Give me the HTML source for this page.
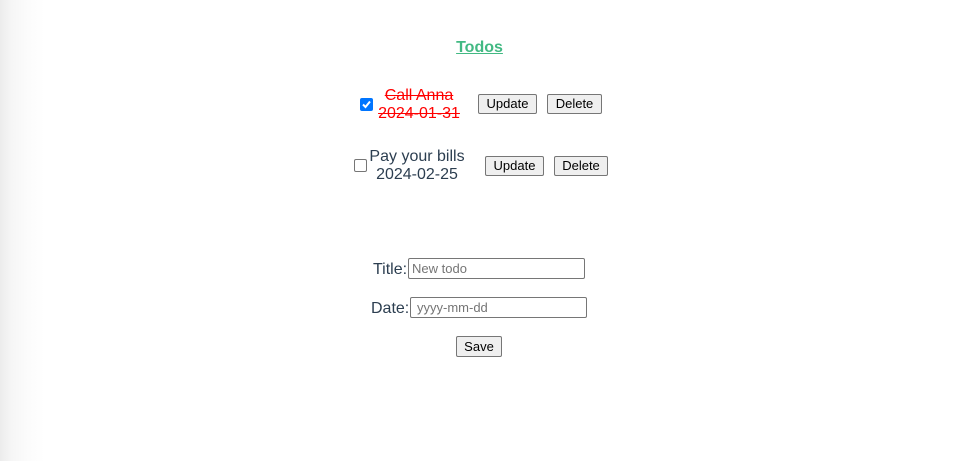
<!DOCTYPE html>
<html><head><meta charset="utf-8"><style>
*{margin:0;padding:0;box-sizing:border-box}
html,body{width:957px;height:461px;overflow:hidden}
body{background:linear-gradient(to right,#ececec 0px,#f6f6f6 12px,#fcfcfc 28px,#fff 45px);font-family:"Liberation Sans",Arial,sans-serif;color:#2c3e50;position:relative}
h1{position:absolute;left:1px;width:957px;top:39px;text-align:center;font-size:16px;font-weight:bold;color:#42b983;text-decoration:underline}
.btn{position:absolute;height:20px;border:1px solid #767676;border-radius:2px;background:#efefef;font-size:13px;color:#000;text-align:center;line-height:18px}
.txt{position:absolute;text-align:center;font-size:16px;line-height:18px}
.done{color:#f00;text-decoration:line-through}
.cb{position:absolute;width:13px;height:13px;border-radius:2px}
.inp{position:absolute;height:21px;border:1px solid #767676;border-radius:2px;background:#fff;font-size:13px;color:#757575;line-height:19px;padding-left:3px}
.lbl{position:absolute;font-size:16px;line-height:18px}
</style></head><body>
<h1>Todos</h1>
<div class="cb" style="left:360px;top:98px;background:#0075ff"><svg width="13" height="13" viewBox="0 0 13 13"><path d="M3 6.5l2.5 2.5L10 3.5" stroke="#fff" stroke-width="2" fill="none"/></svg></div>
<div class="txt done" style="left:368px;width:102px;top:87px">Call Anna<br>2024-01-31</div>
<div class="btn" style="left:478px;top:94px;width:59px">Update</div>
<div class="btn" style="left:547px;top:94px;width:55px">Delete</div>
<div class="cb" style="left:354px;top:159px;border:1px solid #767676;background:#fff"></div>
<div class="txt" style="left:366px;width:102px;top:148px">Pay your bills<br>2024-02-25</div>
<div class="btn" style="left:485px;top:156px;width:59px">Update</div>
<div class="btn" style="left:554px;top:156px;width:54px">Delete</div>
<div class="lbl" style="left:373px;top:261px">Title:</div>
<div class="inp" style="left:408px;top:258px;width:177px">New todo</div>
<div class="lbl" style="left:371px;top:300px">Date:</div>
<div class="inp" style="left:410px;top:297px;width:177px;padding-left:6px">yyyy-mm-dd</div>
<div class="btn" style="left:456px;top:336px;width:46px;height:21px;line-height:19px">Save</div>
</body></html>
